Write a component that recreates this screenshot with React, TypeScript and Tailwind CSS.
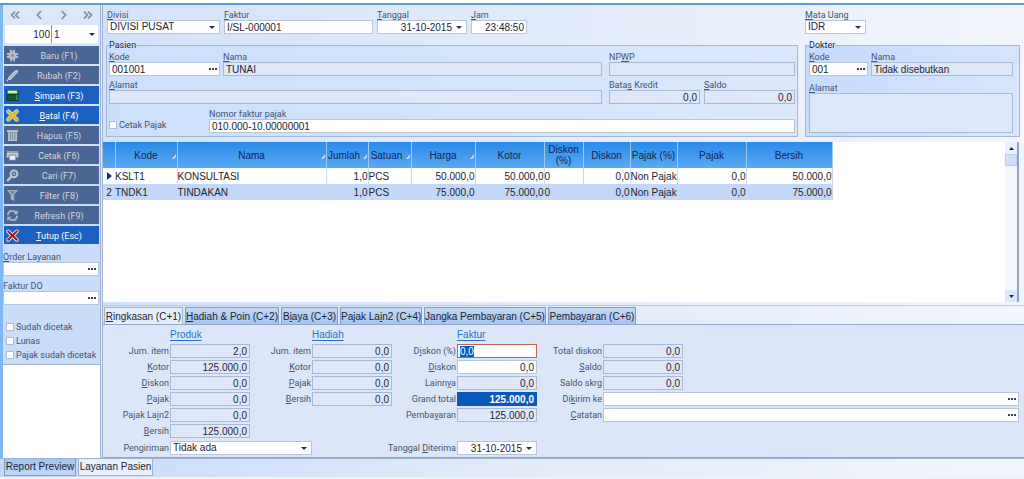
import { useEffect, useRef, useState } from 'react';
import type { ReactNode } from 'react';
import { ChevronLeft, ChevronRight, ChevronsLeft, ChevronsRight } from 'lucide-react';

// "_" in a caption marks the shortcut letter
function Cap({ t }: { t: string }) {
  const i = t.indexOf('_');
  if (i < 0) return <>{t}</>;
  return <>{t.slice(0, i)}<span className="underline underline-offset-1">{t[i + 1]}</span>{t.slice(i + 2)}</>;
}

const EDIT = 'block w-full h-[14px] px-[2px] border border-[#b9c4d6] bg-white text-[10px] leading-[12px] text-[#1c2430] outline-none rounded-none';
const READ = 'block w-full h-[14px] px-[2px] border border-[#a9b9d3] bg-[#dfe8fb] text-[10px] leading-[12px] text-[#1c2430] outline-none rounded-none';
const LABEL = 'block font-[Roboto] text-[9px] leading-[10px] text-[#44536e] whitespace-nowrap';

function Arrow() {
  return <svg className="pointer-events-none absolute right-[5px] top-[6px]" width="6" height="3" viewBox="0 0 6 3"><path d="M0 0h6L3 3z" fill="#26304f" /></svg>;
}

function Dots({ label }: { label: string }) {
  return (
    <button type="button" aria-label={label} className="absolute right-[2px] top-[1px] flex h-[12px] w-[11px] items-center justify-center">
      <svg width="8" height="2" viewBox="0 0 8 2"><path d="M0 0h2v2H0zM3 0h2v2H3zM6 0h2v2H6z" fill="#3a4258" /></svg>
    </button>
  );
}

interface FieldProps { id: string; label: string; value?: string; read?: boolean; right?: boolean; dots?: boolean; className?: string; }

function Field({ id, label, value = '', read, right, dots, className = '' }: FieldProps) {
  return (
    <div className={className}>
      <label htmlFor={id} className={LABEL}><Cap t={label} /></label>
      <div className="relative">
        <input id={id} readOnly={read} defaultValue={value} className={`${read ? READ : EDIT} ${right ? 'text-right' : ''}`} />
        {dots && <Dots label={`Cari ${id}`} />}
      </div>
    </div>
  );
}

function Select({ id, options, className = '' }: { id: string; options: string[]; className?: string }) {
  return (
    <div className={`relative ${className}`}>
      <select id={id} className={`${EDIT} appearance-none`}>
        {options.map(o => <option key={o}>{o}</option>)}
      </select>
      <Arrow />
    </div>
  );
}

function Check({ label }: { label: string }) {
  return (
    <label className={`${LABEL} flex items-center gap-[2px]`}>
      <input type="checkbox" className="h-[8px] w-[8px] shrink-0 appearance-none border border-[#aebdd6] bg-white checked:bg-[#1f5fc0]" />
      <Cap t={label} />
    </label>
  );
}

const ICONS: Record<string, ReactNode> = {
  baru: (
    <g fill="#b9bcc2">
      <path d="M4 .8h1.900v3H4zM7.100.8H9v3H7.100zM4 9.200h1.900v3H4zM7.100 9.200H9v3H7.100zM.8 4h3v1.900h-3zM.8 7.100h3V9h-3zM9.200 4h3v1.900h-3zM9.200 7.100h3V9h-3z" />
      <circle cx="6.500" cy="6.500" r="3.900" />
      <circle cx="6.500" cy="6.500" r="1.200" fill="#6d7f9f" />
    </g>
  ),
  rubah: (
    <g fill="none" strokeLinecap="round">
      <path d="M3.800 9.200 10.400 2.600" stroke="#c3c5ca" strokeWidth="3.600" />
      <path d="M4.400 9.200 9.800 3.800" stroke="#8d95a6" strokeWidth=".8" />
      <path d="M1.200 11.800 3 9.400" stroke="#c3c5ca" strokeWidth="1.400" />
    </g>
  ),
  simpan: (
    <g>
      <path d="M.5 1h12v11H.5z" fill="#0d3a24" />
      <path d="M1.500 1.500h10v3.200h-10z" fill="#9fe0a4" />
      <path d="M2.500 2h8v1.200h-8z" fill="#e4f8e0" />
      <path d="M1.500 6h10v5h-10z" fill="#15582f" />
      <path d="M10 6h1.500v5H10z" fill="#2f9a4e" />
    </g>
  ),
  batal: (
    <g fill="none" strokeLinecap="round">
      <path d="m2.400 2.600 8.200 8M10.600 2.600l-8.200 8" stroke="#fdf7cf" strokeWidth="4.200" />
      <path d="m2.400 2.600 8.200 8M10.600 2.600l-8.200 8" stroke="#8a7420" strokeWidth="2.600" />
      <path d="m2.400 2.600 8.200 8M10.600 2.600l-8.200 8" stroke="#eccb2c" strokeWidth="1.600" />
    </g>
  ),
  hapus: (
    <g>
      <path d="M1 1.200h11v2H1z" fill="#c6c8cc" />
      <path d="M2 3.600h9V12H2z" fill="#bfc2c7" />
      <path d="M4.200 4v7M6.500 4v7M8.800 4v7" stroke="#6d7d9a" strokeWidth=".9" />
    </g>
  ),
  cetak: (
    <g>
      <path d="M1 2h11v2H1z" fill="#9aa2b0" />
      <path d="M.6 4h11.800v4.600H.6z" fill="#c3c5ca" />
      <path d="M3.200 6.200h6.600v5H3.200z" fill="#eceef1" stroke="#66759a" strokeWidth=".8" />
    </g>
  ),
  cari: (
    <g fill="none" stroke="#c0c3c8">
      <circle cx="8" cy="4.800" r="3.400" strokeWidth="2" />
      <circle cx="8" cy="4.800" r="1" strokeWidth=".8" />
      <path d="m5.400 7.600-3.600 3.800" strokeWidth="2.400" strokeLinecap="round" />
    </g>
  ),
  filter: (
    <g>
      <path d="M1 1h11L8.200 6v6l-3.400-1.800V6z" fill="#a9afb9" />
      <path d="M3.600 2.200h5.800L6.800 5.400z" fill="#71809b" />
    </g>
  ),
  refresh: (
    <g fill="none" stroke="#aeb3bc" strokeWidth="1.800">
      <path d="M1.800 6.400C2 3.400 4 1.900 6.500 1.900c1.600 0 2.800.7 3.700 1.900" />
      <path d="M11.200 6.600c-.2 3-2.200 4.500-4.700 4.500-1.600 0-2.800-.7-3.700-1.900" />
      <path d="M11.800 1v4.200H7.600zM1.200 12V7.800h4.200z" fill="#aeb3bc" stroke="none" />
    </g>
  ),
  tutup: (
    <g fill="none" strokeLinecap="round">
      <path d="m2.200 2.400 8.600 8.400M10.800 2.400l-8.600 8.400" stroke="#f3dfe2" strokeWidth="3.800" />
      <path d="m2.200 2.400 8.600 8.400M10.800 2.400l-8.600 8.400" stroke="#8c1622" strokeWidth="2" />
    </g>
  ),
};

const ACTIONS = [
  { icon: 'baru', label: 'Baru (F1)', on: false },
  { icon: 'rubah', label: 'Rubah (F2)', on: false },
  { icon: 'simpan', label: '_Simpan (F3)', on: true },
  { icon: 'batal', label: '_Batal (F4)', on: true },
  { icon: 'hapus', label: 'Hapus (F5)', on: false },
  { icon: 'cetak', label: 'Cetak (F6)', on: false },
  { icon: 'cari', label: 'Cari (F7)', on: false },
  { icon: 'filter', label: 'Filter (F8)', on: false },
  { icon: 'refresh', label: 'Refresh (F9)', on: false },
  { icon: 'tutup', label: '_Tutup (Esc)', on: true },
];

function Sidebar() {
  return (
    <aside className="flex w-[97px] shrink-0 flex-col bg-[linear-gradient(#dce8fb,#c9dcfa_45%,#c9dcfa)]">
      <div className="flex h-[20px] items-center justify-between px-[5px] text-[#858d9d]">
        <button aria-label="Pertama"><ChevronsLeft size={14} strokeWidth={3} /></button>
        <button aria-label="Sebelumnya"><ChevronLeft size={14} strokeWidth={3} /></button>
        <button aria-label="Berikutnya"><ChevronRight size={14} strokeWidth={3} /></button>
        <button aria-label="Terakhir"><ChevronsRight size={14} strokeWidth={3} /></button>
      </div>
      <div className="mx-[2px] flex h-[18px] bg-white text-[10px]">
        <input aria-label="Jumlah baris" defaultValue="100" className="w-[47px] border-r border-[#8f98a8] pr-[1px] text-right outline-none" />
        <div className="relative flex-1">
          <select aria-label="Halaman" className="block h-[18px] w-full appearance-none pl-[2px] outline-none"><option>1</option></select>
          <svg className="pointer-events-none absolute right-[3px] top-[8px]" width="6" height="3" viewBox="0 0 6 3"><path d="M0 0h6L3 3z" fill="#1c2a7a" /></svg>
        </div>
      </div>
      <div className="mx-[1px] mt-[3px] flex flex-col gap-[2px]">
        {ACTIONS.map(a => (
          <button key={a.icon} className={`flex h-[18px] items-center pl-[2px] font-[Roboto] text-[9px] leading-[10px] ${a.on ? 'bg-[#1c60c2] text-white' : 'bg-[#4a6694] text-[#d3d7de]'}`}>
            <svg width="13" height="13" viewBox="0 0 13 13">{ICONS[a.icon]}</svg>
            <span className="flex-1 pt-[2px] text-center"><Cap t={a.label} /></span>
          </button>
        ))}
      </div>
      <div className="mt-[8px] flex flex-col gap-[5px] pr-[1px]">
        <Field id="order" label="_Order Layanan" dots />
        <Field id="do" label="Faktur DO" dots />
      </div>
      <div className="mt-[17px] mb-[4px] flex flex-col gap-[4px] pl-[3px]">
        <Check label="Sudah dicetak" />
        <Check label="Lunas" />
        <Check label="Pajak sudah dicetak" />
      </div>
      <div className="flex-1 border-t border-[#9fb0cc] bg-white" />
    </aside>
  );
}

function Header() {
  return (
    <div className="pt-[5px] pr-[4px] pl-[3px]">
      <div className="flex gap-[4px] pl-px">
        <div className="w-[113px]">
          <label htmlFor="divisi" className={LABEL}><Cap t="_Divisi" /></label>
          <Select id="divisi" options={['DIVISI PUSAT']} />
        </div>
        <Field id="faktur" label="_Faktur" value="I/SL-000001" className="w-[149px]" />
        <div className="w-[90px]">
          <label htmlFor="tanggal" className={LABEL}><Cap t="_Tanggal" /></label>
          <div className="relative">
            <input id="tanggal" defaultValue="31-10-2015" className={`${EDIT} pr-[14px]! text-right`} />
            <Arrow />
          </div>
        </div>
        <Field id="jam" label="_Jam" value="23:48:50" right className="w-[56px]" />
        <div className="ml-auto w-[215px]">
          <label htmlFor="uang" className={LABEL}><Cap t="_Mata Uang" /></label>
          <Select id="uang" options={['IDR']} className="w-[61px]" />
        </div>
      </div>
      <div className="mt-[6px] flex gap-[7px]">
        <fieldset className="min-w-0 flex-1 border border-[#a3b6d3] bg-[linear-gradient(90deg,#cbe0fd,#dbe8fc)] px-[2px] pb-[3px]">
          <legend className="font-[Roboto] text-[9px] leading-[10px] text-[#1f2a3d]">Pasien</legend>
          <div className="mt-[2px] flex">
            <Field id="kode" label="_Kode" value="001001" dots className="mr-[3px] w-[111px]" />
            <Field id="nama" label="_Nama" value="TUNAI" read className="mr-[7px] flex-1" />
            <Field id="npwp" label="NP_WP" read className="w-[186px]" />
          </div>
          <div className="mt-[4px] flex">
            <Field id="alamat" label="_Alamat" read className="mr-[7px] flex-1" />
            <Field id="batas" label="Bata_s Kredit" value="0,0" read right className="mr-[4px] w-[91px]" />
            <Field id="saldo" label="_Saldo" value="0,0" read right className="w-[91px]" />
          </div>
          <div className="mt-[5px] flex items-end">
            <div className="w-[100px] pb-[3px]"><Check label="Cetak Pajak" /></div>
            <Field id="nomor" label="Nomor faktur pa_jak" value="010.000-10.00000001" className="flex-1" />
          </div>
        </fieldset>
        <fieldset className="flex w-[215px] flex-col border border-[#a3b6d3] bg-[linear-gradient(120deg,#c3daff,#dae7fd)] px-[3px] pb-[3px]">
          <legend className="font-[Roboto] text-[9px] leading-[10px] text-[#1f2a3d]">Dokter</legend>
          <div className="mt-[2px] flex gap-[3px] pr-[3px]">
            <Field id="kodedokter" label="_Kode" value="001" dots className="w-[59px]" />
            <Field id="namadokter" label="_Nama" value="Tidak disebutkan" read className="flex-1" />
          </div>
          <div className="mt-[7px] pr-[3px]">
            <label htmlFor="alamatdokter" className={LABEL}><Cap t="_Alamat" /></label>
            <textarea id="alamatdokter" readOnly className="block h-[40px] w-full resize-none border border-[#a9b9d3] bg-[#dce8fd] outline-none" />
          </div>
        </fieldset>
      </div>
    </div>
  );
}

const COLS = [
  { t: 'Kode', w: 'w-[62px]', mark: true },
  { t: 'Nama', w: 'w-[149px]', mark: true },
  { t: 'Jumlah', w: 'w-[42px]', mark: true, right: true },
  { t: 'Satuan', w: 'w-[43px]', mark: true },
  { t: 'Harga', w: 'w-[64px]', mark: true, right: true },
  { t: 'Kotor', w: 'w-[69px]', right: true },
  { t: 'Diskon (%)', w: 'w-[39px]' },
  { t: 'Diskon', w: 'w-[47px]', right: true },
  { t: 'Pajak (%)', w: 'w-[47px]' },
  { t: 'Pajak', w: 'w-[69px]', right: true },
  { t: 'Bersih', w: 'w-[86px]', right: true },
];

const ROWS = [
  ['KSLT1', 'KONSULTASI', '1,0', 'PCS', '50.000,0', '50.000,0', '0', '0,0', 'Non Pajak', '0,0', '50.000,0'],
  ['TNDK1', 'TINDAKAN', '1,0', 'PCS', '75.000,0', '75.000,0', '0', '0,0', 'Non Pajak', '0,0', '75.000,0'],
];

function Items() {
  return (
    <div className="mt-[5px] mr-[5px] flex flex-1 border-r-2 border-[#8fa3c8] bg-white">
      <div className="flex-1">
        <table className="w-[729px] table-fixed border-collapse text-[10px] leading-[11px] text-[#1c2430]">
          <thead>
            <tr className="h-[26px] bg-[linear-gradient(#2a8ae8,#5aa9f5)] text-[#10264e]">
              <th className="w-[12px] border-r border-[#9cc8f5] p-0"></th>
              {COLS.map(c => (
                <th key={c.t} className={`${c.w} relative border-r border-[#9cc8f5] p-0 font-normal`}>
                  <span className={c.mark && c.t.length > 5 ? 'block pr-[6px]' : 'block'}>{c.t}</span>
                  {c.mark && <svg className="absolute right-[1px] bottom-[9px]" width="4" height="5" viewBox="0 0 4 5"><path d="M4 0v3L2 5H0z" fill="#cfe0ee" /><path d="M0 3 3 0" stroke="#5d7ea6" strokeWidth=".8" /></svg>}
                </th>
              ))}
            </tr>
          </thead>
          <tbody>
            {ROWS.map((r, n) => (
              <tr key={r[0]} className={`h-[16px] ${n === 1 ? 'bg-[#c3d8f8]' : ''}`}>
                <td className="p-0 text-center">
                  {n === 0 ? <svg className="mx-auto" width="5" height="8" viewBox="0 0 5 8"><path d="M0 0v8l5-4z" fill="#14307c" /></svg> : n + 1}
                </td>
                {r.map((v, i) => <td key={i} className={`border-r border-[#cfd9e8] p-0 whitespace-nowrap ${COLS[i].right ? 'text-right' : ''}`}>{v}</td>)}
              </tr>
            ))}
          </tbody>
        </table>
      </div>
      <div className="flex w-[12px] flex-col items-center justify-between bg-[#f4f7fc]">
        <div className="w-full">
          <button aria-label="Gulir naik" className="flex h-[12px] w-full items-center justify-center bg-[#eaf1fc]"><svg width="5" height="3" viewBox="0 0 5 3"><path d="M0 3h5L2.500 0z" fill="#1b2350" /></svg></button>
          <div className="h-[12px] border border-[#bdd0ee] bg-[#cfdff8]" />
        </div>
        <button aria-label="Gulir turun" className="flex h-[12px] w-full items-center justify-center bg-[#dbe7fa]"><svg width="5" height="3" viewBox="0 0 5 3"><path d="M0 0h5L2.500 3z" fill="#1b2350" /></svg></button>
      </div>
    </div>
  );
}

const TABS = [
  { t: '_Ringkasan (C+1)', w: 'w-[79px]' },
  { t: '_Hadiah & Poin (C+2)', w: 'w-[94px]' },
  { t: 'B_iaya (C+3)', w: 'w-[57px]' },
  { t: 'Pajak La_in2 (C+4)', w: 'w-[82px]' },
  { t: 'Jangka Pembayaran (C+5)', w: 'w-[122px]' },
  { t: 'Pemba_yaran (C+6)', w: 'w-[88px]' },
];

interface LineProps { id: string; label: string; value?: string; kind?: 'read' | 'edit' | 'total' | 'lookup'; }

function Line({ id, label, value = '', kind = 'read' }: LineProps) {
  return (
    <>
      <label htmlFor={id} className={`${LABEL} pr-[1px] text-right`}><Cap t={label} /></label>
      <div className="relative">
        <input id={id} readOnly={kind === 'read' || kind === 'total'} defaultValue={value}
          className={`${kind === 'lookup' ? '' : 'max-w-[80px] text-right'} ${kind === 'read' ? READ : EDIT} ${kind === 'total' ? 'border-[#0b58bd]! bg-[#0b58bd]! font-bold text-white!' : ''}`} />
        {kind === 'lookup' && <Dots label={`Cari ${id}`} />}
      </div>
    </>
  );
}

function Title({ t }: { t: string }) {
  return <a href="#" className="col-start-2 justify-self-start text-[10px] leading-[14px] text-[#2a72c4] underline underline-offset-2">{t}</a>;
}

const GRID = 'grid auto-rows-[14px] content-start items-center gap-y-[2px]';

function Summary() {
  const ref = useRef<HTMLInputElement>(null);
  useEffect(() => { ref.current?.focus(); ref.current?.select(); }, []);
  return (
    <div className="border-y border-[#8fa5cb] bg-[#dbe6f8] pt-[3px] pr-[5px] pb-[2px]">
      <div className="flex">
        <div className={`${GRID} grid-cols-[67px_80px]`}>
          <Title t="Produk" />
          <Line id="p-item" label="Jum. item" value="2,0" />
          <Line id="p-kotor" label="_Kotor" value="125.000,0" />
          <Line id="p-diskon" label="_Diskon" value="0,0" />
          <Line id="p-pajak" label="_Pajak" value="0,0" />
          <Line id="p-lain" label="Pajak La_in2" value="0,0" />
          <Line id="p-bersih" label="_Bersih" value="125.000,0" />
        </div>
        <div className={`${GRID} grid-cols-[62px_80px]`}>
          <Title t="Hadiah" />
          <Line id="h-item" label="Jum. item" value="0,0" />
          <Line id="h-kotor" label="_Kotor" value="0,0" />
          <Line id="h-pajak" label="_Pajak" value="0,0" />
          <Line id="h-bersih" label="_Bersih" value="0,0" />
        </div>
        <div className={`${GRID} grid-cols-[65px_80px]`}>
          <Title t="Faktur" />
          <label htmlFor="f-persen" className={`${LABEL} pr-[1px] text-right`}><Cap t="D_iskon (%)" /></label>
          <input id="f-persen" ref={ref} defaultValue="0,0" className={`${EDIT} border-[#c4644f]! selection:bg-[#0b58bd] selection:text-white`} />
          <Line id="f-diskon" label="_Diskon" value="0,0" kind="edit" />
          <Line id="f-lain" label="Lainn_ya" value="0,0" />
          <Line id="f-total" label="Grand total" value="125.000,0" kind="total" />
          <Line id="f-bayar" label="Pemba_yaran" value="125.000,0" />
        </div>
        <div className={`${GRID} flex-1 grid-cols-[66px_1fr] pt-[16px]`}>
          <Line id="t-diskon" label="Total diskon" value="0,0" />
          <Line id="t-saldo" label="_Saldo" value="0,0" />
          <Line id="t-skrg" label="Saldo skrg" value="0,0" />
          <Line id="kirim" label="Di_kirim ke" kind="lookup" />
          <Line id="catatan" label="_Catatan" kind="lookup" />
        </div>
      </div>
      <div className="mt-[3px] flex items-center">
        <label htmlFor="pengiriman" className={`${LABEL} w-[67px] pr-[1px] text-right`}>Pengiriman</label>
        <Select id="pengiriman" options={['Tidak ada']} className="w-[142px]" />
        <label htmlFor="diterima" className={`${LABEL} w-[145px] pr-[1px] text-right`}><Cap t="Tanggal _Diterima" /></label>
        <div className="relative w-[80px]">
          <input id="diterima" defaultValue="31-10-2015" className={`${EDIT} pr-[14px]! text-right`} />
          <Arrow />
        </div>
      </div>
    </div>
  );
}

export default function App() {
  const [tab, setTab] = useState(0);
  return (
    <div className="flex min-h-screen flex-col bg-white font-['Liberation_Sans',sans-serif] text-[#1c2430]">
      <div className="mt-[3px] flex flex-1 border-t-2 border-[#5b9bdc]">
        <div className="w-[3px] shrink-0 bg-[#7fb6f6]" />
        <Sidebar />
        <div className="w-[3px] shrink-0 border-x border-[#9fb2d2] bg-[#dfe9fa]" />
        <main className="flex min-w-0 flex-1 flex-col bg-[linear-gradient(90deg,#d3e2fb,#e2ebfa_50%,#f2f5fb)]">
          <Header />
          <Items />
          <div className="mt-[3px] flex items-end gap-[2px] border-t border-[#c3cbda] pt-[1px] pl-px">
            {TABS.map((t, i) => (
              <button key={t.t} onClick={() => setTab(i)}
                className={`${t.w} h-[17px] border border-b-0 text-[10px] leading-[15px] whitespace-nowrap ${i === tab ? 'border-[#9fb2d2] bg-[#e6eefb]' : 'border-[#7f9cc9] bg-[linear-gradient(#c3d8f5,#a5c4ee)]'}`}>
                <Cap t={t.t} />
              </button>
            ))}
          </div>
          <Summary />
        </main>
      </div>
      <div className="border-t border-[#9fb2d2] bg-[linear-gradient(90deg,#c3d9f9,#e2ebfa_50%,#f2f5fb)] pb-[1px] pl-[4px]">
        <div className="flex gap-[2px]">
          <button className="h-[17px] w-[72px] border border-t-0 border-[#7f9cc9] bg-[linear-gradient(#a5c4ee,#c3d8f5)] text-[10px] leading-[16px] whitespace-nowrap">Report Preview</button>
          <button className="h-[17px] w-[75px] border border-t-0 border-[#9fb2d2] bg-[#e9f0fc] text-[10px] leading-[16px] whitespace-nowrap">Layanan Pasien</button>
        </div>
      </div>
      <div className="h-[2px] bg-[#eef1f6]" />
    </div>
  );
}
